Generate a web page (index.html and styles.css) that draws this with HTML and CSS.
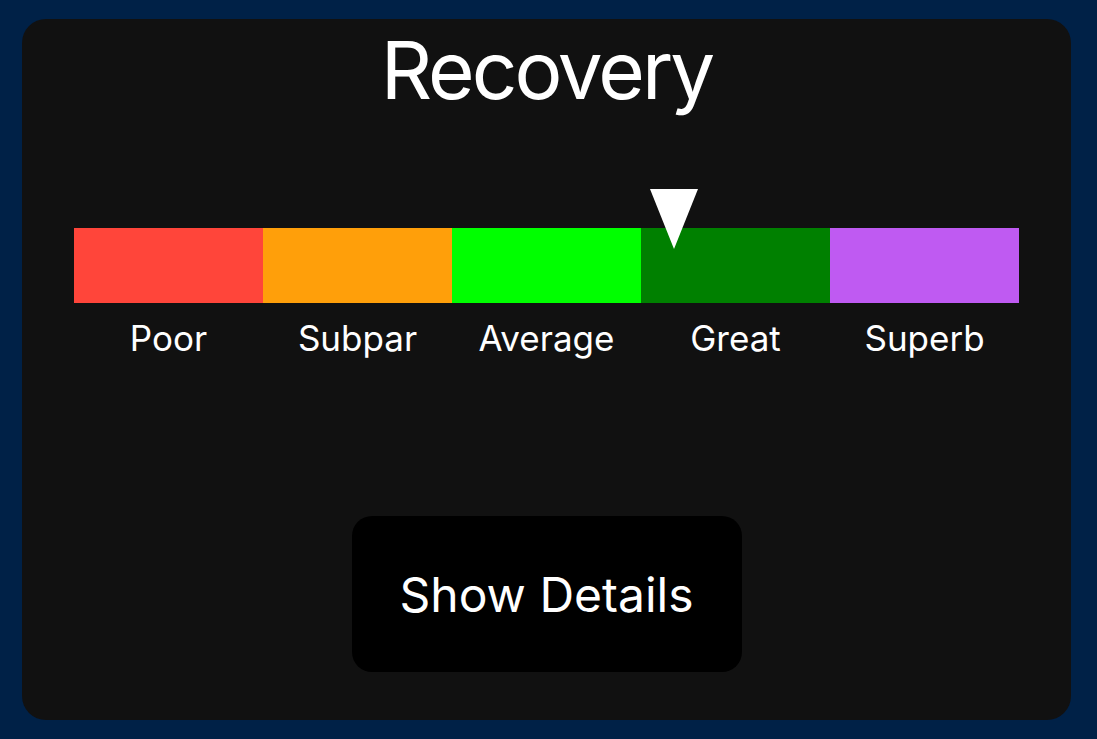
FILE: index.html
```html
<!DOCTYPE html>
<html>
<head>
<meta charset="utf-8">
<link rel="stylesheet" href="styles.css">
</head>
<body>
<div class="card">
  <h1 class="title">Recovery</h1>
  <div class="scale">
    <div class="bar">
      <div class="seg poor"></div>
      <div class="seg subpar"></div>
      <div class="seg average"></div>
      <div class="seg great"></div>
      <div class="seg superb"></div>
      <svg class="marker" style="left: 63.49%" width="48" height="60" viewBox="0 0 48 60"><polygon points="0,0 48,0 24,60" fill="#fff"/></svg>
    </div>
    <div class="labels">
      <span>Poor</span>
      <span>Subpar</span>
      <span>Average</span>
      <span>Great</span>
      <span>Superb</span>
    </div>
  </div>
  <button class="details">Show Details</button>
</div>
</body>
</html>
```
FILE: styles.css
```css
html, body {
  margin: 0;
  padding: 0;
}
body {
  background: #002147;
  width: 1097px;
  height: 739px;
  padding: 19px 26px 19px 22px;
  box-sizing: border-box;
  font-family: Inter, "Noto Sans", sans-serif;
  color: #fff;
}
.card {
  background: #111111;
  border-radius: 24px;
  height: 701px;
  display: flex;
  flex-direction: column;
  align-items: center;
  padding: 0 52px;
  box-sizing: border-box;
}
.title {
  margin: 0;
  font-weight: 400;
  font-size: 80px;
  line-height: 100px;
  margin-top: 1px;
  letter-spacing: -3px;
}
.scale {
  align-self: stretch;
  margin-top: 108px;
}
.bar {
  position: relative;
  display: flex;
  height: 75px;
}
.seg {
  flex: 1;
}
.poor { background: #ff453a; }
.subpar { background: #ff9f0a; }
.average { background: #00ff00; }
.great { background: #008000; }
.superb { background: #bf5af2; }
.marker {
  position: absolute;
  top: -39px;
  transform: translateX(-24px);
}
.labels {
  display: grid;
  grid-template-columns: repeat(5, 1fr);
  text-align: center;
  font-size: 35px;
  line-height: 44px;
  margin-top: 13px;
}
.details {
  margin-top: 156px;
  width: 390px;
  height: 156px;
  background: #000;
  border: none;
  border-radius: 20px;
  color: #fff;
  font-family: Inter, "Noto Sans", sans-serif;
  font-size: 48px;
  padding: 0;
}
```
